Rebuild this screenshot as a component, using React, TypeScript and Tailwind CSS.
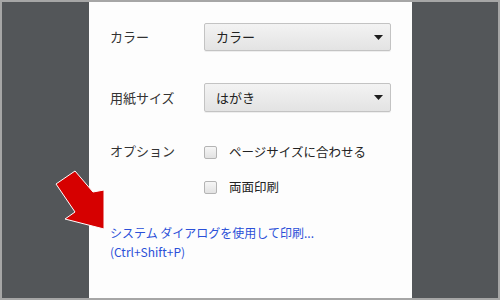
const font = { fontFamily: '"Noto Sans CJK JP", "Noto Sans", sans-serif' };

function Select({ value }: { value: string }) {
  return (
    <div className="flex h-full w-[187px] items-center justify-between rounded-[2px] border border-[#c3c3c3] bg-gradient-to-b from-[#f3f3f3] to-[#e3e3e3] pl-[11px] pr-[7px] text-[13px] text-[#222] shadow-[0_1px_0_rgba(0,0,0,0.06)]">
      <span>{value}</span>
      <svg width="9" height="5" viewBox="0 0 9 5">
        <path d="M0 0 H9 L4.5 5 Z" fill="#1e1e1e" />
      </svg>
    </div>
  );
}

function Checkbox({ label }: { label: string }) {
  return (
    <div className="flex h-[13px] items-center gap-[12px]">
      <span className="h-[13px] w-[13px] rounded-[2px] border border-[#b4b4b4] bg-gradient-to-b from-[#f6f6f6] to-[#e2e2e2]" />
      <span className="text-[12.5px] text-[#222]">{label}</span>
    </div>
  );
}

export default function App() {
  return (
    <div
      className="relative flex h-[300px] w-[500px] border-2 border-[#a6a6a6] bg-[#535659]"
      style={font}
    >
      <div className="w-[87px]" />
      <div className="flex w-[323px] flex-col bg-[#fdfdfd] pl-[21px] pt-[21px]">
        <div className="flex h-[28px] items-center">
          <span className="w-[94px] text-[13px] text-[#333]">カラー</span>
          <Select value="カラー" />
        </div>
        <div className="mt-[32px] flex h-[29px] items-center">
          <span className="w-[94px] text-[13px] text-[#333]">用紙サイズ</span>
          <Select value="はがき" />
        </div>
        <div className="mt-[34px] flex">
          <span className="-mt-[2px] flex h-[13px] w-[94px] items-center text-[13px] text-[#333]">オプション</span>
          <div className="flex flex-col gap-[22px]">
            <Checkbox label="ページサイズに合わせる" />
            <Checkbox label="両面印刷" />
          </div>
        </div>
        <div className="mt-[29px] flex flex-col text-[12px] leading-[19px] text-[#2b50d8]">
          <span>システム ダイアログを使用して印刷...</span>
          <span>(Ctrl+Shift+P)</span>
        </div>
      </div>
      <svg
        className="absolute"
        width="500"
        height="300"
        viewBox="0 0 500 300"
        style={{ left: -2, top: -2 }}
      >
        <polygon
          points="75,171 93,192 104,190 104,229 65,219 75,212 56,184"
          fill="#d60000"
          stroke="#ffffff"
          strokeWidth="1"
          strokeLinejoin="miter"
        />
      </svg>
    </div>
  );
}
